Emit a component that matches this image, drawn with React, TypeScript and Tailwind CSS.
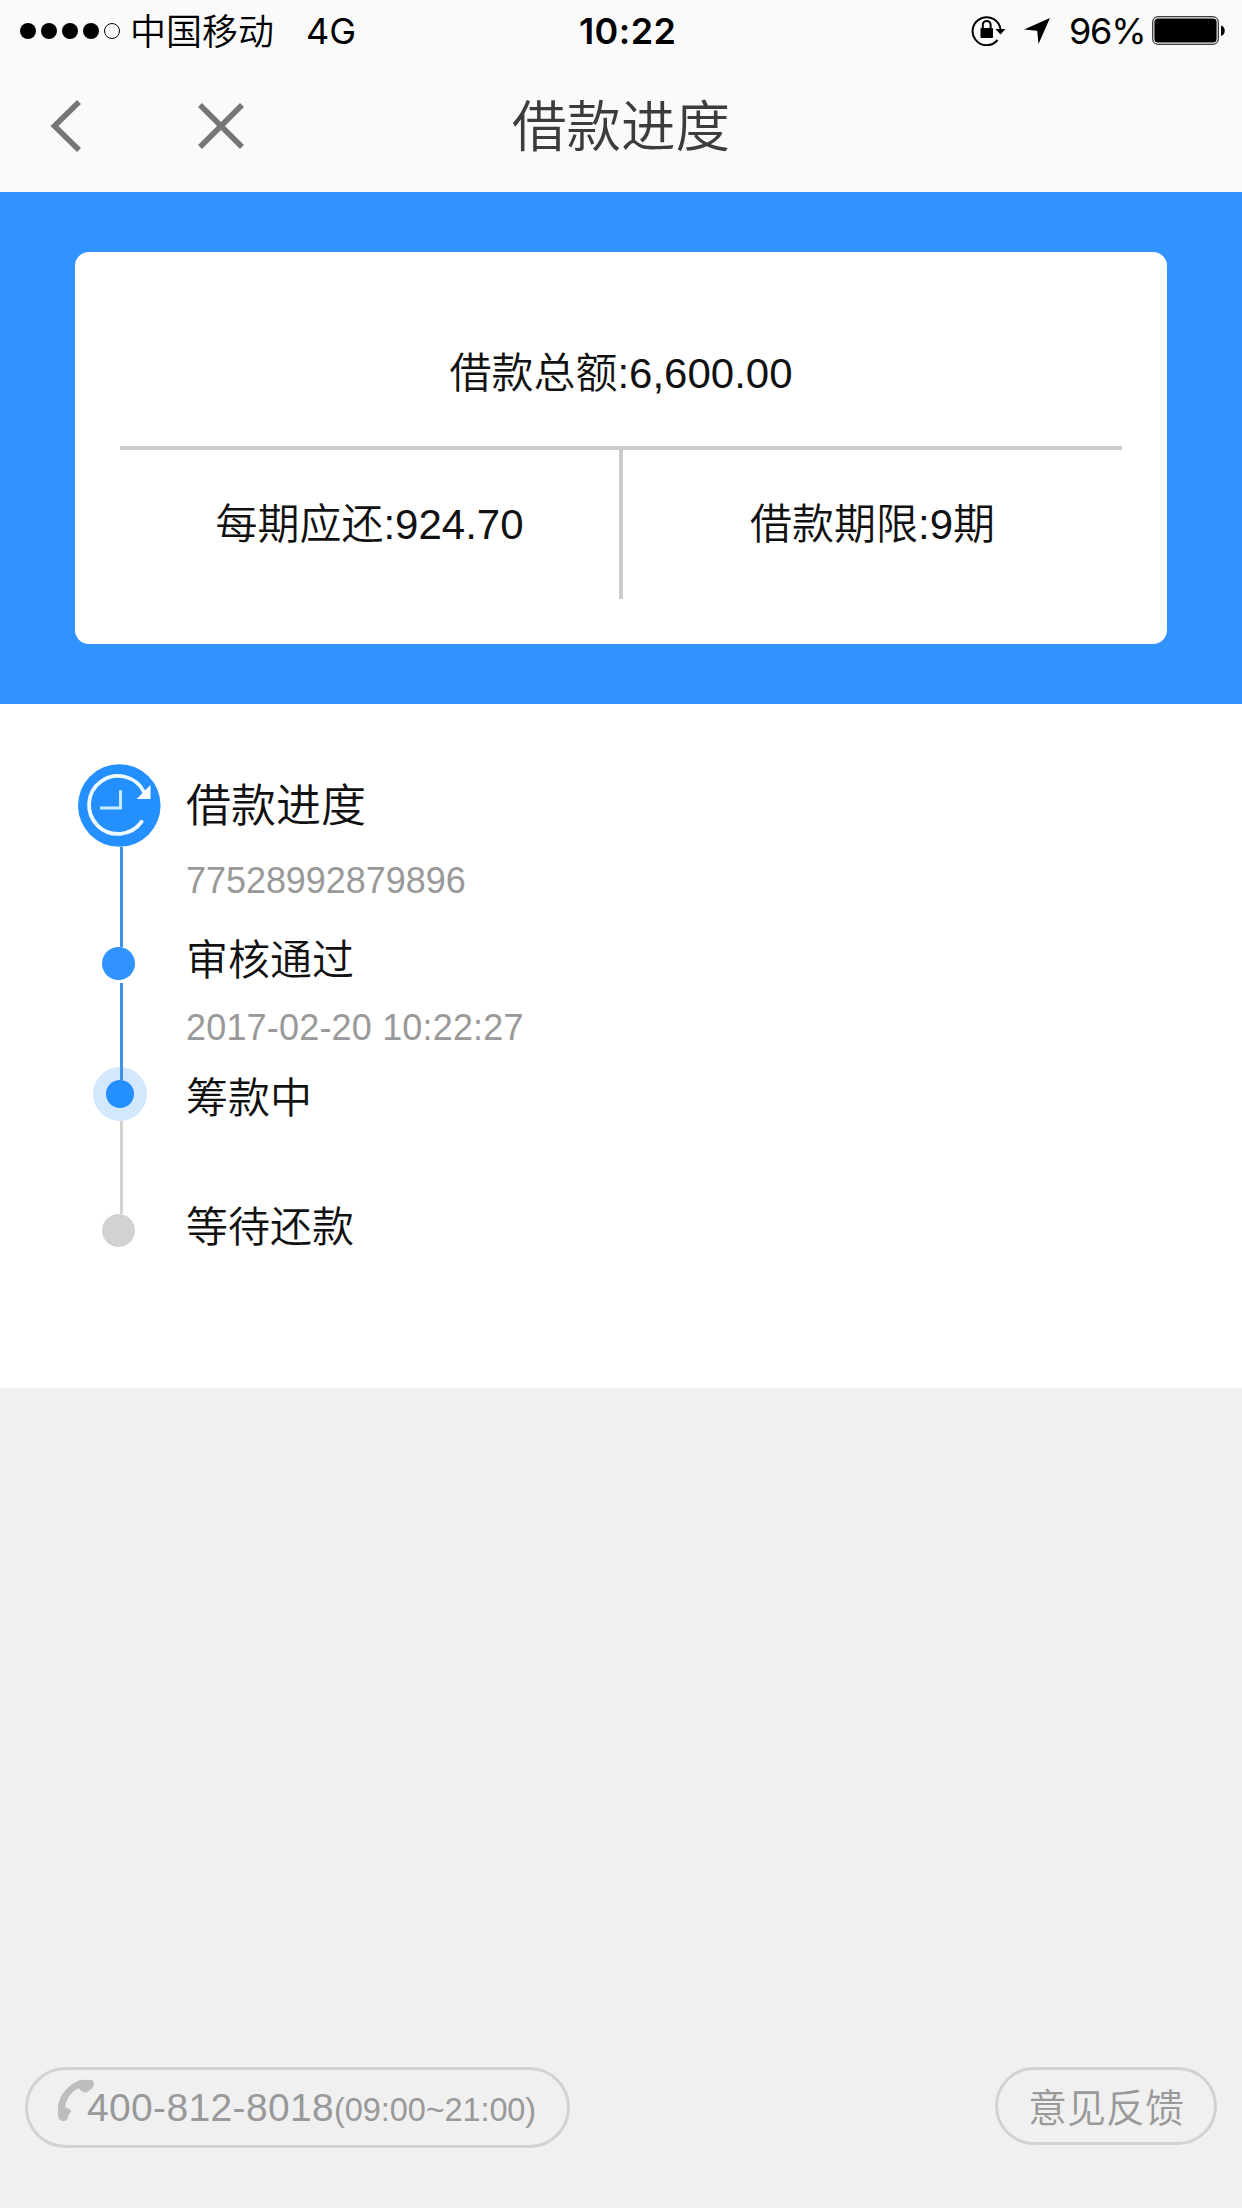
import React from "react";

type Step = {
  title: string;
  note?: string;
  titleClass: string;
  noteClass?: string;
};

const steps: Step[] = [
  {
    title: "借款进度",
    note: "77528992879896",
    titleClass: "text-[45px]",
    noteClass: "mt-[19px] tracking-[-0.05px]",
  },
  {
    title: "审核通过",
    note: "2017-02-20 10:22:27",
    titleClass: "mt-[25px] text-[42px]",
    noteClass: "mt-3 tracking-[0.18px]",
  },
  { title: "筹款中", titleClass: "mt-4 text-[42px]" },
  { title: "等待还款", titleClass: "mt-[69px] text-[42px]" },
];

function StatusBar() {
  return (
    <div className="flex h-[60px] items-center pl-5 pr-4 pt-[2px] font-['Inter','Noto_Sans_CJK_SC',sans-serif] text-[36px] leading-[60px] text-black">
      <div className="flex w-[559px] items-center">
        <div className="-mt-px flex gap-[5px]">
          <span className="size-4 rounded-full bg-black" />
          <span className="size-4 rounded-full bg-black" />
          <span className="size-4 rounded-full bg-black" />
          <span className="size-4 rounded-full bg-black" />
          <span className="size-4 rounded-full border border-black" />
        </div>
        <span className="ml-[10px] pt-[2px] font-[350]">中国移动</span>
        <span className="ml-[32px] font-[380]">4G</span>
      </div>
      <span className="font-semibold tracking-[0.4px]">10:22</span>
      <div className="ml-auto flex items-center">
        <RotationLockIcon />
        <svg className="ml-[17px]" width="28" height="28" viewBox="0 0 28 28">
          <path d="M27 1L15.5 27L14.2 13.8L1 12.5Z" fill="#000" />
        </svg>
        <span className="ml-[18px] w-[83px] font-[380] tracking-[-1.2px]">96%</span>
        <svg width="74" height="30" viewBox="0 0 74 30">
          <rect x="0.75" y="0.75" width="65.5" height="27.5" rx="5" fill="none" stroke="#000" strokeWidth="1" />
          <rect x="2.4" y="2.4" width="62.2" height="24.2" rx="3.5" fill="#000" />
          <path d="M69 9.5C74 10.5 74 19 69 20Z" fill="#000" />
        </svg>
      </div>
    </div>
  );
}

function RotationLockIcon() {
  return (
    <svg className="-mt-0.5" width="35" height="32" viewBox="0 0 35 32">
      <path d="M26.5 26A14 14 0 1 1 29.5 15.5" fill="none" stroke="#000" strokeWidth="2" />
      <path d="M24.5 15H34.5L29.5 20.5Z" fill="#000" />
      <rect x="9.5" y="14" width="12.5" height="10" rx="1" fill="#000" />
      <path d="M11.8 15V10.8a3.9 3.9 0 0 1 7.8 0V15" fill="none" stroke="#000" strokeWidth="2" />
    </svg>
  );
}

function NavBar() {
  return (
    <div className="flex h-[132px] items-center pl-[50px] text-[#3c3c3c]">
      <svg width="32" height="52" viewBox="0 0 32 52">
        <path d="M29 2L4.5 26L29 50" fill="none" stroke="#767676" strokeWidth="5.6" />
      </svg>
      <svg className="ml-[115px]" width="48" height="48" viewBox="0 0 48 48">
        <path d="M3 3L45 45M45 3L3 45" fill="none" stroke="#767676" strokeWidth="5.6" />
      </svg>
      <h1 className="ml-[267px] pt-[3px] text-[54.5px] font-[350] leading-[80px]">借款进度</h1>
    </div>
  );
}

function SummaryCard() {
  return (
    <section className="h-[512px] bg-[#3093ff] px-[75px] pt-[60px]">
      <div className="h-[392px] rounded-[14px] bg-white px-[45px] pt-[92px] text-[42px] font-[350] leading-[60px] text-[#111]">
        <div className="h-[102px] text-center">借款总额:6,600.00</div>
        <div className="flex h-[153px] border-t-4 border-[#ccc] text-center">
          <div className="w-[499px] pt-[45px]">每期应还:924.70</div>
          <div className="w-1 bg-[#ccc]" />
          <div className="flex-1 pt-[45px]">借款期限:9期</div>
        </div>
      </div>
    </section>
  );
}

function ClockIcon() {
  return (
    <svg className="shrink-0" width="83" height="83" viewBox="0 0 83 83">
      <circle cx="41.3" cy="41.5" r="41.3" fill="#2490ff" />
      <path
        d="M63.7 57.7A29 29 0 1 1 66 28"
        fill="none"
        stroke="#effaff"
        strokeWidth="3.8"
        strokeLinecap="round"
      />
      <path d="M72.5 21V35H58.7Z" fill="#fff" />
      <path d="M42.5 26.3V44H22" fill="none" stroke="#c8eaff" strokeWidth="3" />
    </svg>
  );
}

function Progress() {
  return (
    <section className="flex h-[684px] bg-white pl-[78px] pt-[60px]">
      {/* Rail */}
      <div className="flex w-[108px] flex-col">
        <ClockIcon />
        <div className="ml-[42px] h-[100px] w-[3px] bg-[#3f92e6]" />
        <div className="ml-6 size-[33px] rounded-full bg-[#3093ff]" />
        <div className="ml-[42px] mt-[3px] h-[84px] w-[3px] bg-[#3f92e6]" />
        <div className="ml-[15px] flex size-[54px] flex-col rounded-full bg-[#d3e7fd]">
          <div className="ml-[27px] h-[13px] w-[3px] bg-[#3f92e6]" />
          <div className="ml-[13px] size-7 rounded-full bg-[#2490ff]" />
        </div>
        <div className="ml-[42px] h-[93px] w-[3px] bg-[#d2d2d2]" />
        <div className="ml-6 size-[33px] rounded-full bg-[#d2d2d2]" />
      </div>

      {/* Steps */}
      <div className="pt-[13px]">
        {steps.map((s) => (
          <div key={s.title}>
            <div className={`font-[350] leading-[60px] text-[#111] ${s.titleClass}`}>{s.title}</div>
            {s.note && (
              <div className={`text-[36px] leading-[50px] text-[#999] ${s.noteClass}`}>{s.note}</div>
            )}
          </div>
        ))}
      </div>
    </section>
  );
}

function Footer() {
  return (
    <footer className="mt-auto flex items-start justify-between px-[25px] pb-[60px] text-[39px] text-[#999]">
      <a className="flex h-[81px] w-[545px] items-center rounded-full border-3 border-[#d2d2d2] pl-[28px]">
        <svg className="-mt-3.5" width="38" height="44" viewBox="0 0 38 44">
          <path
            d="M23 9C24 12 28 14 31 13.500C32 11 37 11 38 5.500C38 2 36 0.500 34 0.800C31 1.500 28 0 24 1C12 6 2 17 2 30C1.500 34 2 38 3 40C5 42.500 9 42.500 11 41C12 39 11.500 36 15 33C15.500 30.500 12 29 9.500 29C9 22 14 13 23 9Z"
            fill="#bdbdbd"
          />
        </svg>
        <span className="-ml-[7px] pt-[2px] leading-[60px] tracking-[0.35px]">
          400-812-8018<span className="text-[32.5px] tracking-[-0.1px]">(09:00~21:00)</span>
        </span>
      </a>
      <a className="flex h-[78px] w-[222px] items-center justify-center rounded-full border-3 border-[#d2d2d2] pt-1.5 font-[350]">
        意见反馈
      </a>
    </footer>
  );
}

export default function App() {
  return (
    <div className="flex h-[2208px] w-[1242px] flex-col bg-[#f0f0f0] font-['Liberation_Sans','Noto_Sans_CJK_SC',sans-serif]">
      <header className="h-[192px] bg-[#fafafa]">
        <StatusBar />
        <NavBar />
      </header>
      <SummaryCard />
      <Progress />
      <Footer />
    </div>
  );
}
